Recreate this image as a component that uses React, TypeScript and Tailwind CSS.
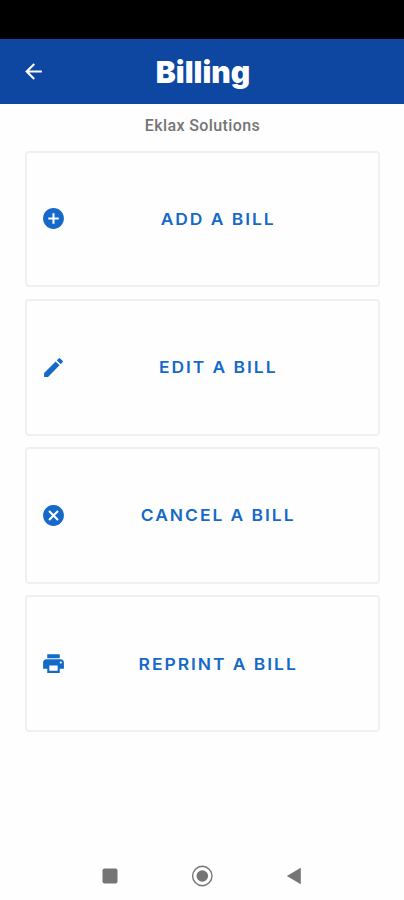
import { MdAddCircle, MdArrowBack, MdCancel, MdEdit, MdPrint } from 'react-icons/md'

const actions = [
  { icon: MdAddCircle, label: 'ADD A BILL' },
  { icon: MdEdit, label: 'EDIT A BILL' },
  { icon: MdCancel, label: 'CANCEL A BILL' },
  { icon: MdPrint, label: 'REPRINT A BILL' },
]

function Header() {
  return (
    <header className="grid h-[65px] grid-cols-[67px_1fr_65px] items-center bg-[#0d47a1] text-white">
      <button aria-label="Back" className="flex justify-center">
        <MdArrowBack className="h-[25px] w-[25px]" />
      </button>
      <h1 className="text-center font-['Inter',sans-serif] text-[30px] leading-none font-black">
        Billing
      </h1>
    </header>
  )
}

function NavigationBar() {
  return (
    <nav className="flex h-12 items-center justify-center gap-[71px] text-[#757575]">
      <svg viewBox="0 0 20 20" className="h-5 w-5 fill-current">
        <rect x="2.5" y="2.5" width="15" height="15" rx="2" />
      </svg>
      <svg viewBox="0 0 22 22" className="h-[22px] w-[22px] fill-current">
        <circle cx="11.3" cy="11" r="9.7" fill="none" stroke="currentColor" strokeWidth="1.4" />
        <circle cx="11.3" cy="11" r="5.8" />
      </svg>
      <svg viewBox="0 0 20 20" className="h-5 w-5 fill-current">
        <path d="M2.8 10 16.8 1.8v16.4z" />
      </svg>
    </nav>
  )
}

export default function App() {
  return (
    <div className="flex h-[900px] w-full flex-col bg-[#fefefe]">
      <div className="h-[39px] shrink-0 bg-black" />
      <Header />

      <main className="flex flex-1 flex-col pt-3 pr-6 pl-[25px]">
        <p className="text-center font-['Roboto',sans-serif] text-base leading-5 font-medium tracking-[0.4px] text-[#757575]">
          Eklax Solutions
        </p>

        <div className="mt-[14.5px] flex flex-col gap-[11.5px]">
          {actions.map(({ icon: Icon, label }) => (
            <button
              key={label}
              className="flex h-[136.8px] w-full items-center rounded-[4px] border-2 border-[#f0f0f0] pr-[12px] pl-[14px] text-[#1469c9]"
            >
              <Icon className="h-[25px] w-[25px] shrink-0" />
              <span className="flex-1 scale-x-[1.09] pl-[4px] font-['Inter',sans-serif] text-base font-semibold tracking-[1.8px]">
                {label}
              </span>
            </button>
          ))}
        </div>
      </main>

      <NavigationBar />
    </div>
  )
}
